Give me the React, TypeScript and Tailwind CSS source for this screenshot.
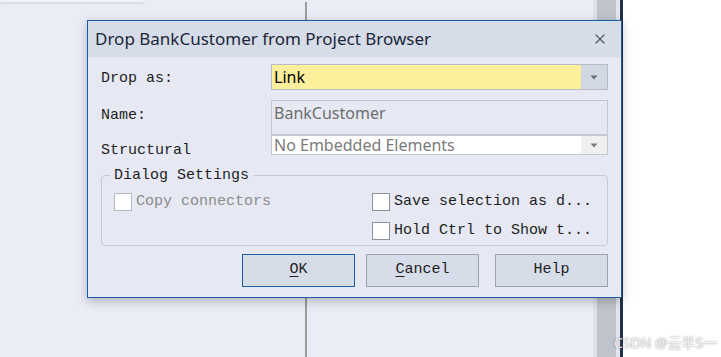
import { X } from 'lucide-react';

const mono = 'font-["Liberation_Mono","DejaVu_Sans_Mono",monospace]';
const ui = 'font-["Noto_Sans","Open_Sans",sans-serif]';

function Caret({ color }: { color: string }) {
    return (
        <svg width="8" height="5" viewBox="0 0 8 5">
            <path d="M0.5 0.5 L7.5 0.5 L4 4.5 Z" fill={color} />
        </svg>
    );
}

function Checkbox({ label, disabled }: { label: string; disabled?: boolean }) {
    return (
        <div className="flex items-center h-[18px]">
            <div className={`w-[18px] h-[18px] bg-white border ${disabled ? 'border-[#b4b7c0]' : 'border-[#8e929e]'}`} />
            <span className={`ml-[4px] text-[15px] leading-[18px] whitespace-nowrap ${disabled ? 'text-[#8b8b8b]' : 'text-[#1e1e1e]'}`}>
                {label}
            </span>
        </div>
    );
}

function Button({ label, underline, primary }: { label: string; underline: string; primary?: boolean }) {
    return (
        <div className={`w-[113px] h-[33px] flex items-center justify-center bg-[#d6dce8] border ${primary ? 'border-[#1b5fa3]' : 'border-[#9ca3b0]'} text-[15px] text-[#1e1e1e]`}>
            <span className="underline underline-offset-[3px]">{underline}</span>
            <span>{label}</span>
        </div>
    );
}

export default function App() {
    return (
        <div className="relative w-[721px] h-[357px] overflow-hidden flex">
            {/* Background window */}
            <div className="w-[593px] h-full bg-[#eaedf6] flex flex-col">
                <div className="w-[145px] h-[2px] bg-[#f2f4f9] shadow-[0_1px_3px_rgba(0,0,0,0.15)]" />
                <div className="flex-1 flex">
                    <div className="w-[305px]" />
                    <div className="w-[2px] h-full bg-[#9c9c9c]" />
                </div>
            </div>
            <div className="w-[4px] h-full bg-[#dde1ea]" />
            <div className="w-[19px] h-full bg-[#bfc4cc]" />
            <div className="w-[4px] h-full bg-[#e3e6ee]" />
            <div className="w-[3px] h-full bg-[#22324d]" />
            <div className="flex-1 h-full bg-white" />

            {/* Dialog */}
            <div className="absolute left-[87px] top-[20px] w-[535px] h-[278px] border border-[#1b5a9c] bg-[#e6e9f3] shadow-[0_3px_10px_rgba(0,0,0,0.25)] flex flex-col">
                <div className="h-[36px] bg-[#d6dce8] flex items-center justify-between pl-[7px] pr-[13px]">
                    <span className={`${ui} text-[17px] text-[#1c2638]`}>Drop BankCustomer from Project Browser</span>
                    <X className="w-[16px] h-[16px] text-[#5a5a5a]" strokeWidth={1.8} />
                </div>

                <div className={`${mono} flex flex-col px-[13px] pt-[7px]`}>
                    {/* Drop as */}
                    <div className="flex items-center h-[26px]">
                        <span className="w-[170px] pt-[4px] text-[15px] text-[#1e1e1e]">Drop as:</span>
                        <div className="flex-1 h-full flex border border-[#b7bbc6] bg-[#fdf09c]">
                            <span className={`${ui} flex-1 pl-[2px] text-[16px] leading-[24px] text-black`}>Link</span>
                            <div className="w-[26px] h-full bg-[#d1d7e3] flex items-center justify-center">
                                <Caret color="#6a6a6a" />
                            </div>
                        </div>
                    </div>

                    {/* Name */}
                    <div className="flex mt-[10px]">
                        <span className="w-[170px] pt-[6px] text-[15px] leading-[20px] text-[#1e1e1e]">Name:</span>
                        <div className="flex-1 h-[35px] border border-[#c3c7d1] bg-[#e6e9f3]">
                            <span className={`${ui} block pl-[2px] pt-[2px] text-[16px] leading-[20px] text-[#6e6e6e]`}>BankCustomer</span>
                        </div>
                    </div>

                    {/* Structural */}
                    <div className="flex h-[20px] items-start">
                        <span className="w-[170px] pt-[6px] text-[15px] leading-[20px] text-[#1e1e1e]">Structural</span>
                        <div className="flex-1 h-[20px] flex border border-[#c3c7d1] bg-white overflow-hidden">
                            <span className={`${ui} flex-1 pl-[2px] text-[16px] leading-[18px] text-[#7b7b7b]`}>No Embedded Elements</span>
                            <div className="w-[26px] h-full bg-[#f0f0f0] flex items-center justify-center">
                                <Caret color="#7a7a7a" />
                            </div>
                        </div>
                    </div>

                    {/* Dialog Settings group */}
                    <div className="relative mt-[20px] h-[71px] border border-[#c6cad4] rounded-[4px] flex pl-[12px] pt-[17px]">
                        <span className="absolute left-[8px] top-[-10px] px-[4px] bg-[#e6e9f3] text-[15px] leading-[20px] text-[#1e1e1e]">
                            Dialog Settings
                        </span>
                        <div className="w-[258px]">
                            <Checkbox label="Copy connectors" disabled />
                        </div>
                        <div className="flex flex-col gap-[11px]">
                            <Checkbox label="Save selection as d..." />
                            <Checkbox label="Hold Ctrl to Show t..." />
                        </div>
                    </div>

                    {/* Buttons */}
                    <div className="flex justify-end mt-[8px]">
                        <Button primary underline="O" label="K" />
                        <div className="w-[11px]" />
                        <Button underline="C" label="ancel" />
                        <div className="w-[16px]" />
                        <Button underline="" label="Help" />
                    </div>
                </div>
            </div>

            {/* watermark */}
            <span className='absolute left-[614px] top-[334px] whitespace-nowrap font-["Noto_Sans","Noto_Sans_CJK_SC",sans-serif] text-[14px] leading-[18px] text-[#f5f5f5] [text-shadow:0_0_2px_rgba(0,0,0,0.5)]'>
                CSDN @云半S一
            </span>
        </div>
    );
}
